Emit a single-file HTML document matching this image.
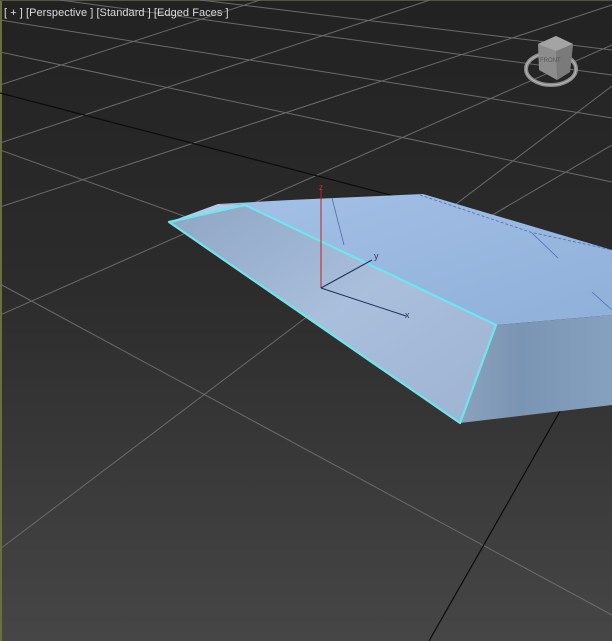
<!DOCTYPE html>
<html><head><meta charset="utf-8"><style>
html,body{margin:0;padding:0;width:612px;height:641px;overflow:hidden;background:#2a2a2a}
svg{display:block}
</style></head><body>
<svg width="612" height="641" viewBox="0 0 612 641" xmlns="http://www.w3.org/2000/svg">
<defs>
<linearGradient id="bg" x1="0" y1="0" x2="0" y2="1">
<stop offset="0" stop-color="#222222"/><stop offset="0.45" stop-color="#2c2c2c"/><stop offset="1" stop-color="#464646"/>
</linearGradient>
<linearGradient id="front" x1="0" y1="0" x2="1" y2="1">
<stop offset="0" stop-color="#8ea6c4"/><stop offset="0.5" stop-color="#a9bfdc"/><stop offset="1" stop-color="#9db3d2"/>
</linearGradient>
<linearGradient id="top" x1="0" y1="0" x2="1" y2="1">
<stop offset="0" stop-color="#a4c0e6"/><stop offset="1" stop-color="#8fb0da"/>
</linearGradient>
<linearGradient id="side" x1="0" y1="0" x2="1" y2="0">
<stop offset="0" stop-color="#8aa2be"/><stop offset="0.4" stop-color="#7a94b3"/><stop offset="1" stop-color="#86a0c0"/>
</linearGradient>
</defs>
<rect width="612" height="641" fill="url(#bg)"/>
<rect x="0" y="0" width="2" height="641" fill="#6e6e3c"/>
<rect x="0" y="0" width="612" height="1" fill="#55553a"/>
<g stroke="#6a6a6a" stroke-width="1" fill="none">
<line x1="0" y1="20" x2="612" y2="118"/>
<line x1="0" y1="52" x2="612" y2="182"/>
<line x1="60" y1="0" x2="612" y2="75"/>
<line x1="200" y1="0" x2="612" y2="50"/>
<line x1="0" y1="150" x2="612" y2="370"/>
<line x1="0" y1="284" x2="612" y2="615"/>
<line x1="0" y1="143" x2="430" y2="0"/>
<line x1="0" y1="207" x2="612" y2="5"/>
<line x1="0" y1="315" x2="612" y2="45"/>
<line x1="0" y1="549" x2="612" y2="86"/>
<line x1="330" y1="310" x2="612" y2="145"/>
<line x1="0" y1="85" x2="260" y2="0"/>
</g>
<line x1="0" y1="93" x2="612" y2="253" stroke="#0c0c0c" stroke-width="1.2"/>
<line x1="429" y1="641" x2="612" y2="320" stroke="#0c0c0c" stroke-width="1.2"/>
<polygon points="218,204 290,200 423,194 612,250 612,315 496,325 245,205" fill="url(#top)"/>
<polygon points="496,325 612,315 612,405 460,423" fill="url(#side)"/>
<polygon points="169,222 218,204 245,205" fill="#b4cbe8"/>
<polygon points="169,222 245,205 496,325 460,423" fill="url(#front)"/>
<polyline points="420,195 530,232 612,250" stroke="#4a6fb0" stroke-width="0.8" fill="none" stroke-dasharray="3,2"/>
<line x1="332" y1="198" x2="344" y2="245" stroke="#4a6fb0" stroke-width="0.8"/>
<line x1="532" y1="233" x2="558" y2="258" stroke="#4a6fb0" stroke-width="0.8"/>
<line x1="592" y1="292" x2="612" y2="310" stroke="#4a6fb0" stroke-width="0.8"/>
<polygon points="169,222 245,205 496,325 460,423" fill="none" stroke="#6fe6ee" stroke-width="2.2" stroke-linejoin="round"/>
<line x1="321" y1="189" x2="321" y2="288" stroke="#c02020" stroke-width="1"/>
<line x1="321" y1="288" x2="372" y2="260" stroke="#1f2f55" stroke-width="1"/>
<line x1="321" y1="288" x2="406" y2="316" stroke="#1f2f55" stroke-width="1"/>
<text x="319" y="190" font-family="Liberation Sans, sans-serif" font-size="8" fill="#d03030">z</text>
<text x="374" y="259" font-family="Liberation Sans, sans-serif" font-size="9" fill="#2a3a5a">y</text>
<text x="405" y="318" font-family="Liberation Sans, sans-serif" font-size="9" fill="#2a3a5a">x</text>
<ellipse cx="551" cy="69" rx="25" ry="16" fill="none" stroke="#8a8a8a" stroke-width="4"/>
<ellipse cx="551" cy="69" rx="25" ry="16" fill="none" stroke="#bbbbbb" stroke-width="1"/>
<polygon points="538,44 556,36 573,44 570,72 557,80 539,70" fill="#8c8c8c"/>
<polygon points="538,44 556,36 573,44 556,51" fill="#a4a4a4"/>
<polygon points="556,51 573,44 570,72 557,80" fill="#7a7a7a"/>
<text x="540" y="62" font-family="Liberation Sans, sans-serif" font-size="6" fill="#555">FRONT</text>
</svg>
<div style="position:absolute;left:4px;top:7px;font-family:'Liberation Sans',sans-serif;font-size:11px;color:#dcdcdc;white-space:nowrap;letter-spacing:0.05px">[ + ] [Perspective ] [Standard ] [Edged Faces ]</div>
</body></html>
